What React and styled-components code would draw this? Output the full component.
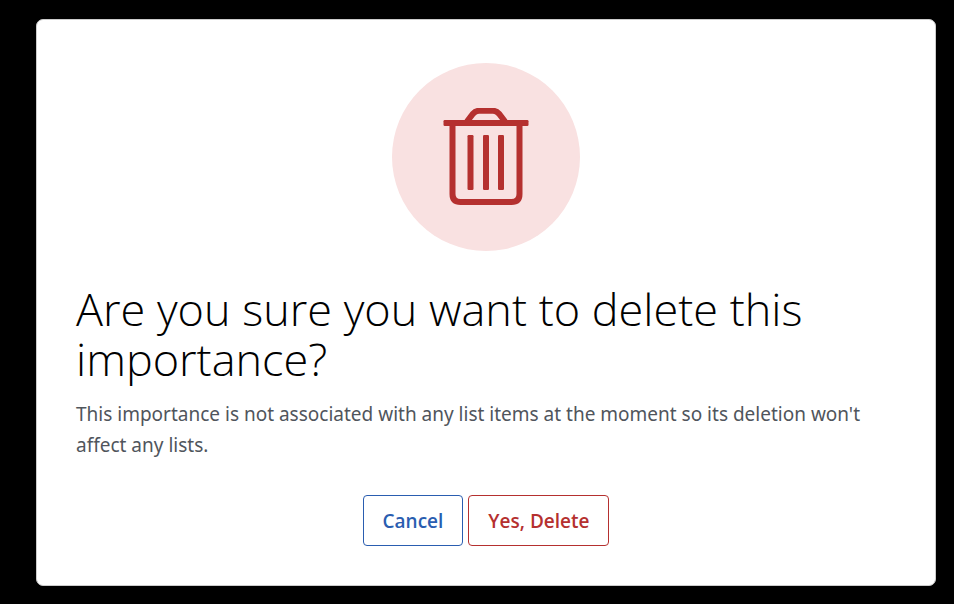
import styled, { createGlobalStyle } from "styled-components";

const GlobalStyle = createGlobalStyle`
    * {
        box-sizing: border-box;
    }

    body {
        margin: 0;
        background-color: #000000;
        font-family: "Noto Sans", "Open Sans", sans-serif;
    }
`;

const Overlay = styled.div`
    min-height: 100vh;
    padding: 19px 18px 18px 36px;
    background-color: #000000;
`;

const Dialog = styled.div`
    display: flex;
    flex-direction: column;
    padding: 43px 39px 39px;
    background-color: #ffffff;
    border: 1px solid #cccccc;
    border-radius: 7px;
`;

const IconCircle = styled.div`
    display: flex;
    align-items: center;
    justify-content: center;
    align-self: center;
    width: 188px;
    height: 188px;
    border-radius: 50%;
    background-color: #f9e1e1;
    color: #b5302f;
`;

const Heading = styled.h1`
    margin: 33px 0 0;
    font-family: "Open Sans", sans-serif;
    font-size: 45px;
    font-weight: 300;
    line-height: 50px;
    color: #000000;
`;

const Message = styled.p`
    margin: 15px 0 0;
    font-size: 19px;
    line-height: 31px;
    letter-spacing: normal;
    color: #50555c;
`;

const Actions = styled.div`
    display: flex;
    justify-content: center;
    gap: 5px;
    margin-top: 34px;
`;

const Button = styled.button`
    height: 51px;
    padding: 0 19px;
    font-family: "Open Sans", sans-serif;
    font-size: 19px;
    font-weight: 600;
    color: ${(props) => (props.$danger ? "#b5302f" : "#2a5db0")};
    background-color: #ffffff;
    border: 1px solid currentColor;
    border-radius: 4px;
    cursor: pointer;
`;

function TrashIcon(){
    return(
        <svg width="86" height="98" viewBox="0 0 86 98" fill="none" stroke="currentColor" strokeWidth="6" aria-hidden="true">
            <path d="M24 13.5 L30 5.7 Q32.5 2.8 36 2.8 H50 Q53.5 2.8 56 5.7 L62 13.5" />
            <path d="M9.5 14 V86 Q9.5 94 17.5 94 H68.5 Q76.5 94 76.5 86 V14" />
            <g fill="currentColor" stroke="none">
                <rect x="0.5" y="12" width="85" height="6" rx="1.2" />
                <rect x="24.5" y="27" width="6" height="55" rx="1.2" />
                <rect x="40" y="27" width="6" height="55" rx="1.2" />
                <rect x="55" y="27" width="6" height="55" rx="1.2" />
            </g>
        </svg>
    )
}

export default function App(){
    return(
        <>
            <GlobalStyle />
            <Overlay>
                <Dialog role="alertdialog" aria-modal="true" aria-labelledby="deleteTitle" aria-describedby="deleteMessage">
                    <IconCircle>
                        <TrashIcon />
                    </IconCircle>
                    <Heading id="deleteTitle">Are you sure you want to delete this importance?</Heading>
                    <Message id="deleteMessage">
                        This importance is not associated with any list items at the moment so its deletion won't affect any lists.
                    </Message>
                    <Actions>
                        <Button type="button">Cancel</Button>
                        <Button type="button" $danger>Yes, Delete</Button>
                    </Actions>
                </Dialog>
            </Overlay>
        </>
    )
}
